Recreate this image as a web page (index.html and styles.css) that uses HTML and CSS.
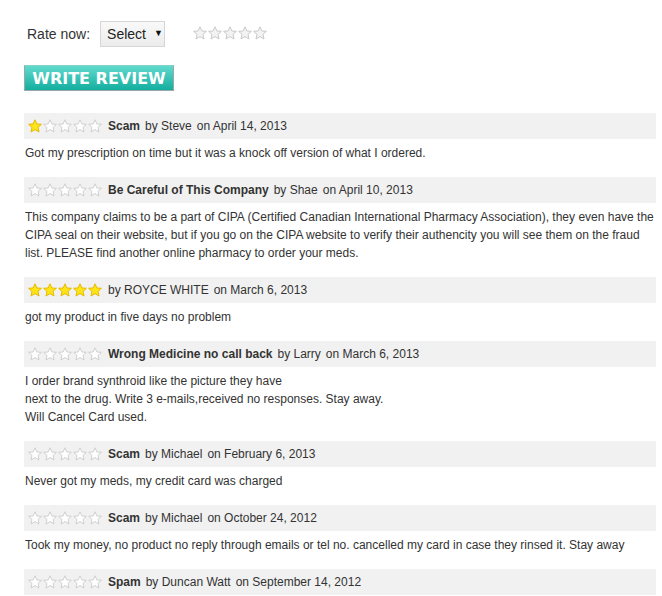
FILE: index.html
```html
<!DOCTYPE html>
<html>
<head>
<meta charset="utf-8">
<link rel="stylesheet" href="styles.css">
</head>
<body>
<svg width="0" height="0" class="defs">
  <defs>
    <symbol id="star" viewBox="0 0 14 14">
      <polygon points="7,0.8 8.9,5 13.4,5.3 10,8.4 11,13 7,10.6 3,13 4,8.4 0.6,5.3 5.1,5" />
    </symbol>
  </defs>
</svg>
<div class="page">
  <div class="rate-row">
    <span class="rate-label">Rate now:</span>
    <div class="select"><span>Select</span><span class="arrow">▼</span></div>
    <div class="stars stars-rate">
      <svg class="star s-rate"><use href="#star"/></svg>
      <svg class="star s-rate"><use href="#star"/></svg>
      <svg class="star s-rate"><use href="#star"/></svg>
      <svg class="star s-rate"><use href="#star"/></svg>
      <svg class="star s-rate"><use href="#star"/></svg>
    </div>
  </div>
  <div class="write-btn">WRITE REVIEW</div>

  <div class="reviews">
    <div class="review">
      <div class="rev-head">
        <div class="stars">
          <svg class="star s-on"><use href="#star"/></svg>
          <svg class="star s-off"><use href="#star"/></svg>
          <svg class="star s-off"><use href="#star"/></svg>
          <svg class="star s-off"><use href="#star"/></svg>
          <svg class="star s-off"><use href="#star"/></svg>
        </div>
        <span class="title">Scam</span>
        <span>by Steve</span>
        <span>on April 14, 2013</span>
      </div>
      <div class="rev-body">Got my prescription on time but it was a knock off version of what I ordered.</div>
    </div>

    <div class="review">
      <div class="rev-head">
        <div class="stars">
          <svg class="star s-off"><use href="#star"/></svg>
          <svg class="star s-off"><use href="#star"/></svg>
          <svg class="star s-off"><use href="#star"/></svg>
          <svg class="star s-off"><use href="#star"/></svg>
          <svg class="star s-off"><use href="#star"/></svg>
        </div>
        <span class="title">Be Careful of This Company</span>
        <span>by Shae</span>
        <span>on April 10, 2013</span>
      </div>
      <div class="rev-body">This company claims to be a part of CIPA (Certified Canadian International Pharmacy Association), they even have the CIPA seal on their website, but if you go on the CIPA website to verify their authencity you will see them on the fraud list. PLEASE find another online pharmacy to order your meds.</div>
    </div>

    <div class="review">
      <div class="rev-head">
        <div class="stars">
          <svg class="star s-on"><use href="#star"/></svg>
          <svg class="star s-on"><use href="#star"/></svg>
          <svg class="star s-on"><use href="#star"/></svg>
          <svg class="star s-on"><use href="#star"/></svg>
          <svg class="star s-on"><use href="#star"/></svg>
        </div>
        <span>by ROYCE WHITE</span>
        <span>on March 6, 2013</span>
      </div>
      <div class="rev-body">got my product in five days no problem</div>
    </div>

    <div class="review">
      <div class="rev-head">
        <div class="stars">
          <svg class="star s-off"><use href="#star"/></svg>
          <svg class="star s-off"><use href="#star"/></svg>
          <svg class="star s-off"><use href="#star"/></svg>
          <svg class="star s-off"><use href="#star"/></svg>
          <svg class="star s-off"><use href="#star"/></svg>
        </div>
        <span class="title">Wrong Medicine no call back</span>
        <span>by Larry</span>
        <span>on March 6, 2013</span>
      </div>
      <div class="rev-body">I order brand synthroid like the picture they have<br>next to the drug. Write 3 e-mails,received no responses. Stay away.<br>Will Cancel Card used.</div>
    </div>

    <div class="review">
      <div class="rev-head">
        <div class="stars">
          <svg class="star s-off"><use href="#star"/></svg>
          <svg class="star s-off"><use href="#star"/></svg>
          <svg class="star s-off"><use href="#star"/></svg>
          <svg class="star s-off"><use href="#star"/></svg>
          <svg class="star s-off"><use href="#star"/></svg>
        </div>
        <span class="title">Scam</span>
        <span>by Michael</span>
        <span>on February 6, 2013</span>
      </div>
      <div class="rev-body">Never got my meds, my credit card was charged</div>
    </div>

    <div class="review">
      <div class="rev-head">
        <div class="stars">
          <svg class="star s-off"><use href="#star"/></svg>
          <svg class="star s-off"><use href="#star"/></svg>
          <svg class="star s-off"><use href="#star"/></svg>
          <svg class="star s-off"><use href="#star"/></svg>
          <svg class="star s-off"><use href="#star"/></svg>
        </div>
        <span class="title">Scam</span>
        <span>by Michael</span>
        <span>on October 24, 2012</span>
      </div>
      <div class="rev-body">Took my money, no product no reply through emails or tel no. cancelled my card in case they rinsed it. Stay away</div>
    </div>

    <div class="review">
      <div class="rev-head">
        <div class="stars">
          <svg class="star s-off"><use href="#star"/></svg>
          <svg class="star s-off"><use href="#star"/></svg>
          <svg class="star s-off"><use href="#star"/></svg>
          <svg class="star s-off"><use href="#star"/></svg>
          <svg class="star s-off"><use href="#star"/></svg>
        </div>
        <span class="title">Spam</span>
        <span>by Duncan Watt</span>
        <span>on September 14, 2012</span>
      </div>
    </div>
  </div>
</div>
</body>
</html>
```
FILE: styles.css
```css
html, body {
  margin: 0;
  padding: 0;
  background: #fff;
}
body {
  font-family: "Liberation Sans", Arial, sans-serif;
  color: #333;
  overflow: hidden;
}
.defs {
  position: absolute;
  width: 0;
  height: 0;
}
.page {
  width: 632px;
  padding-left: 24px;
}
.rate-row {
  display: flex;
  align-items: center;
  height: 26px;
  margin-top: 21px;
  font-size: 14px;
}
.rate-label {
  margin-left: 3px;
  margin-right: 10px;
}
.select {
  box-sizing: border-box;
  width: 65px;
  height: 26px;
  display: flex;
  align-items: center;
  padding: 0 0 0 6px;
  border: 1px solid #d6d6d6;
  background: linear-gradient(#f9f9f9, #ececec);
  color: #222;
}
.select .arrow {
  font-size: 9px;
  color: #111;
  margin-top: -2px;
  margin-left: 8px;
}
.stars {
  display: flex;
  gap: 1px;
}
.stars-rate {
  margin-left: 28px;
  margin-top: -2px;
}
.star {
  width: 14px;
  height: 14px;
  display: block;
}
.s-rate {
  fill: #f3f3f3;
  stroke: #c9c9c9;
  stroke-width: 1;
}
.s-off {
  fill: #fff;
  stroke: #cfcfcf;
  stroke-width: 1;
}
.s-on {
  fill: #ffe516;
  stroke: #e6b800;
  stroke-width: 1;
}
.write-btn {
  box-sizing: border-box;
  width: 150px;
  height: 26px;
  margin-top: 18px;
  display: flex;
  align-items: center;
  justify-content: center;
  font-family: "DejaVu Sans", Verdana, sans-serif;
  font-weight: bold;
  font-size: 16px;
  color: #fff;
  background: linear-gradient(#62d9cd, #13ae9f);
  border: 1px solid #9aa9a8;
  border-top-color: #7fd4cb;
}
.reviews {
  margin-top: 22px;
}
.review {
  margin-bottom: 15px;
}
.rev-head {
  height: 26px;
  background: #f1f1f1;
  display: flex;
  align-items: center;
  gap: 5px;
  padding-left: 4px;
  font-size: 12px;
}
.rev-head .stars {
  margin-right: 1px;
}
.title {
  font-weight: bold;
}
.rev-body {
  margin-top: 5px;
  padding-left: 1px;
  font-size: 12px;
  line-height: 18px;
}
```
